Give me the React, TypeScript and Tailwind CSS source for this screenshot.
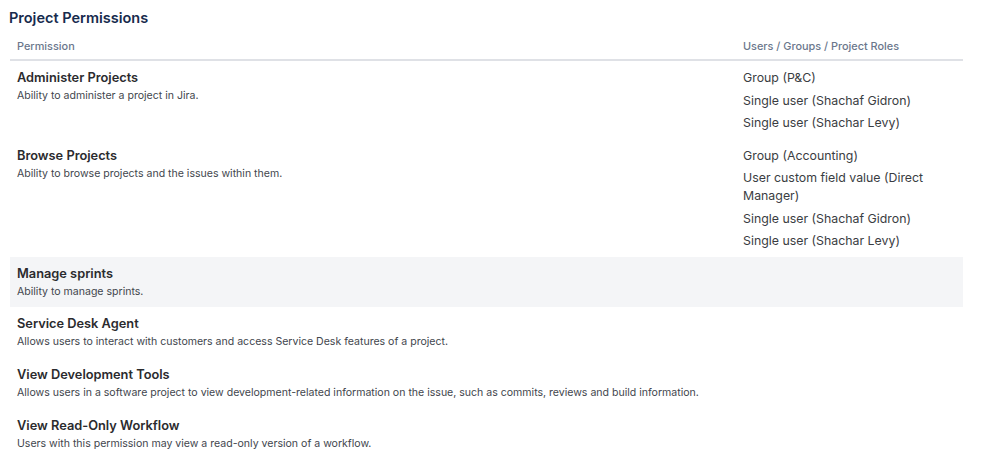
const rows = [
  {
    name: "Administer Projects",
    desc: "Ability to administer a project in Jira.",
    holders: ["Group (P&C)", "Single user (Shachaf Gidron)", "Single user (Shachar Levy)"],
  },
  {
    name: "Browse Projects",
    desc: "Ability to browse projects and the issues within them.",
    holders: [
      "Group (Accounting)",
      "User custom field value (Direct Manager)",
      "Single user (Shachaf Gidron)",
      "Single user (Shachar Levy)",
    ],
  },
  { name: "Manage sprints", desc: "Ability to manage sprints.", holders: [], active: true },
  {
    name: "Service Desk Agent",
    desc: "Allows users to interact with customers and access Service Desk features of a project.",
    holders: [],
  },
  {
    name: "View Development Tools",
    desc: "Allows users in a software project to view development-related information on the issue, such as commits, reviews and build information.",
    holders: [],
  },
  {
    name: "View Read-Only Workflow",
    desc: "Users with this permission may view a read-only version of a workflow.",
    holders: [],
  },
];

export default function App() {
  return (
    <div className="h-[453px] overflow-hidden bg-white pl-[9px] pt-[9px] font-['Inter','Liberation_Sans',sans-serif]">
      <h1 className="text-[14.5px] leading-[18px] font-semibold text-[#172b4d]">Project Permissions</h1>

      <div className="mt-[10px] ml-px w-[953px]">
        {/* Header */}
        <div className="flex h-[24px] items-center border-b-2 border-[#dfe1e6] pb-[3px] text-[10.9px] font-medium text-[#6b778c]">
          <div className="w-[733px] pl-[7px]">Permission</div>
          <div className="flex-1">Users / Groups / Project Roles</div>
        </div>

        {/* Rows */}
        {rows.map((row) => (
          <div key={row.name} className={`flex pt-[7px] ${row.active ? "bg-[#f4f5f7]" : ""}`}>
            <div className="w-[733px] pb-[7.7px] pl-[7px]">
              <div className="text-[12.8px] leading-[20px] font-semibold text-[#2b2b2e]">{row.name}</div>
              <div className="text-[10.55px] leading-[16px] text-[#42464d]">{row.desc}</div>
            </div>
            <div className="mt-px flex w-[210px] flex-col gap-[4.5px] pb-[6.5px]">
              {row.holders.map((h, i) => (
                <div key={i} className="text-[12.35px] leading-[18px] text-[#3a3d42]">
                  {h}
                </div>
              ))}
            </div>
          </div>
        ))}
      </div>
    </div>
  );
}
